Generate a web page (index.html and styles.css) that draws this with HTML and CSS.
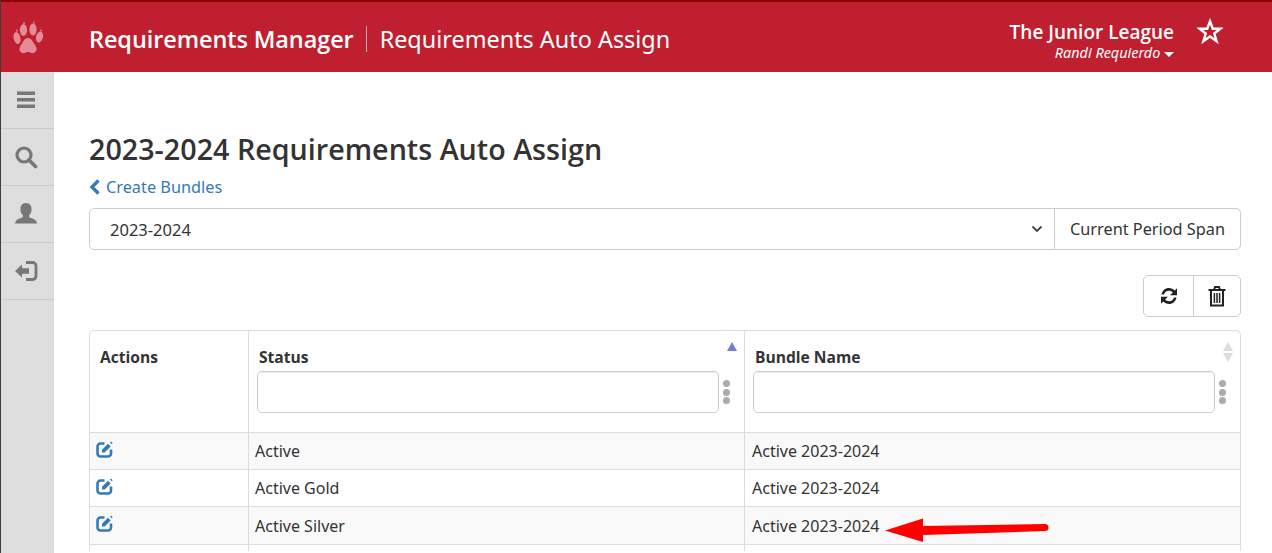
FILE: index.html
```html
<!DOCTYPE html>
<html lang="en">
<head>
<meta charset="utf-8">
<title>Requirements Auto Assign</title>
<link rel="stylesheet" href="styles.css">
</head>
<body>
<header class="topbar">
  <div class="logo-cell">
    <svg class="paw" viewBox="0 0 32 36" width="32" height="36"><g fill="#e58a97"><ellipse cx="5" cy="18" rx="3.4" ry="6" transform="rotate(-14 5 18)"/><ellipse cx="11.5" cy="10" rx="3.6" ry="6"/><ellipse cx="21" cy="9.500" rx="3.600" ry="6"/><ellipse cx="27.500" cy="17" rx="3.400" ry="5.500" transform="rotate(16 27.500 17)"/><path d="M16 18c3 0 4.500 3 6 5.500 1.500 2.500 3 4 2.500 6.500-.5 2.500-3 3.500-5 3-1.500-.4-2.200-1-3.500-1s-2 .6-3.500 1c-2 .5-4.500-.5-5-3-.5-2.500 1-4 2.500-6.500 1.500-2.500 3-5.500 6-5.500z"/><path d="M4 11.500l1-3 1 3zM11 4l1-3 1 3zM21 3.500l1-3 .8 3zM28 11l1.500-2.500.2 3z"/></g></svg>
  </div>
  <div class="titles">
    <span class="app-title">Requirements Manager</span>
    <span class="page-title">Requirements Auto Assign</span>
  </div>
  <div class="account">
    <div class="org">The Junior League</div>
    <div class="user">Randi Requierdo <span class="caret"></span></div>
  </div>
  <svg class="star" viewBox="0 0 28 28" width="26" height="26"><path d="M14 3.500l3 8h8.300l-6.700 5.200 2.500 8.300-7.100-5-7.100 5 2.500-8.300-6.700-5.200H11z" fill="none" stroke="#fff" stroke-width="2.600" stroke-linejoin="miter"/></svg>
</header>
<div class="shell">
  <nav class="sidebar">
    <a class="nav-item"><svg viewBox="0 0 20 20" width="20" height="20"><path d="M1 1.500h18v3.600H1zM1 8h18v3.600H1zM1 14.500h18v3.600H1z" fill="#777"/></svg></a>
    <a class="nav-item"><svg viewBox="0 0 24 24" width="24" height="24"><circle cx="10" cy="10" r="7" fill="none" stroke="#777" stroke-width="3.200"/><path d="M15 15l6.500 6.500" stroke="#777" stroke-width="3.800" stroke-linecap="round"/></svg></a>
    <a class="nav-item"><svg viewBox="0 0 24 24" width="24" height="24"><path d="M12 1c3.700 0 5.600 2.800 5.600 6.300 0 2.600-1 4.700-2.600 6.100 0 1.300.5 2 2 2.700 2.500 1 5.500 1.700 6 5.400H1c.5-3.700 3.500-4.400 6-5.400 1.500-.7 2-1.400 2-2.700-1.600-1.400-2.600-3.500-2.600-6.100C6.400 3.800 8.300 1 12 1z" fill="#777"/></svg></a>
    <a class="nav-item"><svg viewBox="0 0 24 24" width="24" height="24"><path d="M1 12l7-6.500v3.700h7v5.600H8v3.700z" fill="#777"/><path d="M12 3.500h6.500c2 0 3.500 1.500 3.500 3.500v10c0 2-1.500 3.500-3.500 3.500H12" fill="none" stroke="#777" stroke-width="2.800"/></svg></a>
  </nav>
  <main class="content">
    <h1 class="heading">2023-2024 Requirements Auto Assign</h1>
    <a class="back-link"><svg viewBox="0 0 12 16" width="12" height="16"><path d="M9.500 1.500L3 8l6.500 6.500" fill="none" stroke="#337ab7" stroke-width="3.400"/></svg>Create Bundles</a>
    <div class="period-group">
      <div class="period-select">
        <span>2023-2024</span>
        <svg viewBox="0 0 12 8" width="12" height="8"><path d="M1.500 1.500L6 6l4.500-4.500" fill="none" stroke="#444" stroke-width="1.800"/></svg>
      </div>
      <div class="period-addon">Current Period Span</div>
    </div>
    <div class="toolbar">
      <div class="btn-group">
        <button class="tool-btn"><svg viewBox="0 0 20 20" width="20" height="20"><path d="M2.500 8.500C3.300 4.500 6.200 2 10 2c2.400 0 4.300 1 5.700 2.500L18 2.200v7h-7l2.800-2.800C12.800 5.300 11.500 4.700 10 4.700c-2.500 0-4.400 1.500-5 3.800zM17.500 11.500C16.700 15.500 13.800 18 10 18c-2.400 0-4.300-1-5.700-2.500L2 17.800v-7h7l-2.800 2.800c1 1.100 2.300 1.700 3.800 1.700 2.500 0 4.400-1.500 5-3.800z" fill="#222"/></svg></button>
        <button class="tool-btn"><svg viewBox="0 0 18 22" width="18" height="22"><path d="M.5 5h17M6 5l1-3h4l1 3" fill="none" stroke="#222" stroke-width="2"/><path d="M3 5.500v15h12v-15" fill="none" stroke="#222" stroke-width="2"/><path d="M6.400 8v10M9 8v10M11.600 8v10" stroke="#222" stroke-width="1.500"/></svg></button>
      </div>
    </div>
    <div class="grid-table">
      <div class="row head-row">
        <div class="cell col-actions head-cell"><b>Actions</b></div>
        <div class="cell col-wide head-cell">
          <b>Status</b>
          <span class="sort sort-up"></span>
          <div class="filter"><div class="filter-box"></div><span class="dots"><i></i><i></i><i></i></span></div>
        </div>
        <div class="cell col-wide head-cell">
          <b>Bundle Name</b>
          <span class="sort sort-both"></span>
          <div class="filter"><div class="filter-box"></div><span class="dots"><i></i><i></i><i></i></span></div>
        </div>
      </div>
      <div class="row body-row odd">
        <div class="cell col-actions"><svg class="edit" viewBox="0 0 18 18" width="18" height="18"><use href="#edit-icon"/></svg></div>
        <div class="cell col-wide">Active</div>
        <div class="cell col-wide">Active 2023-2024</div>
      </div>
      <div class="row body-row">
        <div class="cell col-actions"><svg class="edit" viewBox="0 0 18 18" width="18" height="18"><use href="#edit-icon"/></svg></div>
        <div class="cell col-wide">Active Gold</div>
        <div class="cell col-wide">Active 2023-2024</div>
      </div>
      <div class="row body-row odd tall">
        <div class="cell col-actions"><svg class="edit" viewBox="0 0 18 18" width="18" height="18"><use href="#edit-icon"/></svg></div>
        <div class="cell col-wide">Active Silver</div>
        <div class="cell col-wide">Active 2023-2024</div>
      </div>
      <div class="row body-row cut-row">
        <div class="cell col-actions"></div>
        <div class="cell col-wide"></div>
        <div class="cell col-wide"></div>
      </div>
    </div>
  </main>
</div>
<svg class="arrow" viewBox="0 0 170 30" width="170" height="30"><path d="M0 15.500L38 3.500V11L160 9a3.500 3.500 0 0 1 0 7L38 20V27z" fill="#f00"/></svg>
<svg class="defs" width="0" height="0"><defs><symbol id="edit-icon" viewBox="0 0 18 18"><path d="M8.500 3.500H4.500a3 3 0 0 0-3 3v7a3 3 0 0 0 3 3h7.500a3 3 0 0 0 3-3V9.500" fill="none" stroke="#337ab7" stroke-width="2.600"/><path d="M6 12.500V9.800l6-6 2.700 2.700-6 6z" fill="#337ab7"/><path d="M14 2.500l1-1 1.700 1.700-1 1z" fill="#337ab7"/></symbol></defs></svg>
</body>
</html>
```
FILE: styles.css
```css
html, body {
  margin: 0;
  padding: 0;
  height: 553px;
  overflow: hidden;
  background: #fff;
}
body {
  font-family: "Noto Sans", "Open Sans", sans-serif;
  font-size: 16px;
  color: #333;
  position: relative;
  border-left: 1px solid #3a3f3f;
  box-sizing: border-box;
}
svg { display: block; }
.defs { position: absolute; }
.topbar {
  height: 72px;
  box-sizing: border-box;
  background: #c01f2f;
  border-top: 2px solid #8f0000;
  display: flex;
  align-items: center;
  color: #fff;
}
.logo-cell {
  width: 53px;
  display: flex;
  justify-content: center;
}
.paw { margin-top: 1px; }
.titles {
  margin-left: 35px;
  display: flex;
  align-items: center;
  flex: 1;
  margin-top: 3px;
}
.app-title {
  font-family: "Open Sans", "Noto Sans", sans-serif;
  font-size: 23.500px;
  font-weight: 600;
  letter-spacing: -.1px;
  padding-right: 12px;
  border-right: 1px solid rgba(255,255,255,.6);
  line-height: 26px;
}
.page-title {
  font-size: 23.400px;
  padding-left: 13px;
  line-height: 26px;
}
.account {
  text-align: right;
  margin-top: 7px;
}
.org {
  font-family: "Open Sans", "Noto Sans", sans-serif;
  font-size: 19px;
  font-weight: 600;
  line-height: 24px;
}
.user {
  font-size: 14.400px;
  font-style: italic;
  line-height: 17px;
}
.caret {
  display: inline-block;
  vertical-align: middle;
  border: 5px solid transparent;
  border-top-color: #fff;
  border-bottom-width: 0;
}
.star { margin-left: 23px; margin-right: 49px; margin-top: -13px; }
.shell {
  display: flex;
  height: 481px;
}
.sidebar {
  width: 53px;
  background: #ddd;
  flex: none;
}
.nav-item {
  height: 56px;
  border-bottom: 1px solid #c9c9c9;
  display: flex;
  align-items: center;
  justify-content: center;
  padding-right: 4px;
}
.content {
  flex: 1;
  padding: 0 31px 0 35px;
  min-width: 0;
}
.heading {
  font-family: "Open Sans", "Noto Sans", sans-serif;
  margin: 57px 0 0;
  font-size: 28.700px;
  font-weight: 600;
  line-height: 40px;
  color: #333;
}
.back-link {
  display: flex;
  align-items: center;
  gap: 5px;
  color: #337ab7;
  font-size: 16.300px;
  line-height: 22px;
  margin-top: 7px;
}
.period-group {
  display: flex;
  height: 42px;
  margin-top: 10px;
  box-sizing: border-box;
  border: 1px solid #ccc;
  border-radius: 5px;
}
.period-select {
  flex: 1;
  display: flex;
  align-items: center;
  justify-content: space-between;
  padding: 0 11px 0 20px;
  border-right: 1px solid #ccc;
  font-size: 16.500px;
}
.period-addon {
  width: 185px;
  display: flex;
  align-items: center;
  justify-content: center;
  font-size: 16.300px;
}
.toolbar {
  display: flex;
  justify-content: flex-end;
  margin-top: 25px;
}
.btn-group {
  display: flex;
  height: 42px;
  box-sizing: border-box;
  border: 1px solid #ccc;
  border-radius: 5px;
}
.tool-btn {
  background: none;
  border: 0;
  padding: 0;
  width: 49px;
  display: flex;
  align-items: center;
  justify-content: center;
}
.tool-btn + .tool-btn { border-left: 1px solid #ccc; width: 47px; }
.grid-table {
  margin-top: 13px;
  border: 1px solid #ddd;
  border-bottom: 0;
  border-radius: 5px 5px 0 0;
}
.row { display: flex; }
.head-row { height: 101px; }
.body-row {
  border-top: 1px solid #ddd;
  height: 36px;
}
.body-row.tall { height: 37px; }
.body-row.cut-row { height: 6px; }
.odd { background: #f9f9f9; }
.cell {
  box-sizing: border-box;
  display: flex;
  align-items: center;
  padding: 0 6px;
  position: relative;
}
.col-actions { width: 158px; flex: none; }
.col-wide { width: 496px; flex: none; border-left: 1px solid #ddd; }
.col-wide:last-child { flex: 1; width: auto; }
.body-row .col-wide:last-child { padding-left: 7px; }
.head-cell {
  display: block;
  padding: 15px 10px 0 10px;
}
.head-cell b {
  display: block;
  font-family: "Open Sans", "Noto Sans", sans-serif;
  font-weight: 700;
  line-height: 22px;
  font-size: 15.600px;
}
.filter {
  display: flex;
  align-items: center;
  margin: 3px 0 0 -2px;
}
.filter-box {
  flex: 1;
  height: 42px;
  box-sizing: border-box;
  border: 1px solid #ccc;
  border-radius: 5px;
  box-shadow: inset 0 1px 1px rgba(0,0,0,.08);
}
.dots {
  width: 15px;
  display: flex;
  flex-direction: column;
  align-items: center;
  gap: 1.500px;
}
.dots i {
  display: block;
  width: 7px;
  height: 7px;
  border-radius: 50%;
  background: #aaa;
}
.sort {
  position: absolute;
  right: 7px;
  top: 11px;
  width: 0;
  height: 0;
  border-left: 5.500px solid transparent;
  border-right: 5.500px solid transparent;
  border-bottom: 9px solid #7b7bd6;
}
.sort-both { border-bottom-color: #ddd; }
.sort-both::after {
  content: "";
  position: absolute;
  left: -5.500px;
  top: 11px;
  border-left: 5.500px solid transparent;
  border-right: 5.500px solid transparent;
  border-top: 9px solid #ddd;
}
.edit { margin-top: -5px; }
.arrow {
  position: absolute;
  left: 884px;
  top: 515px;
}
```
